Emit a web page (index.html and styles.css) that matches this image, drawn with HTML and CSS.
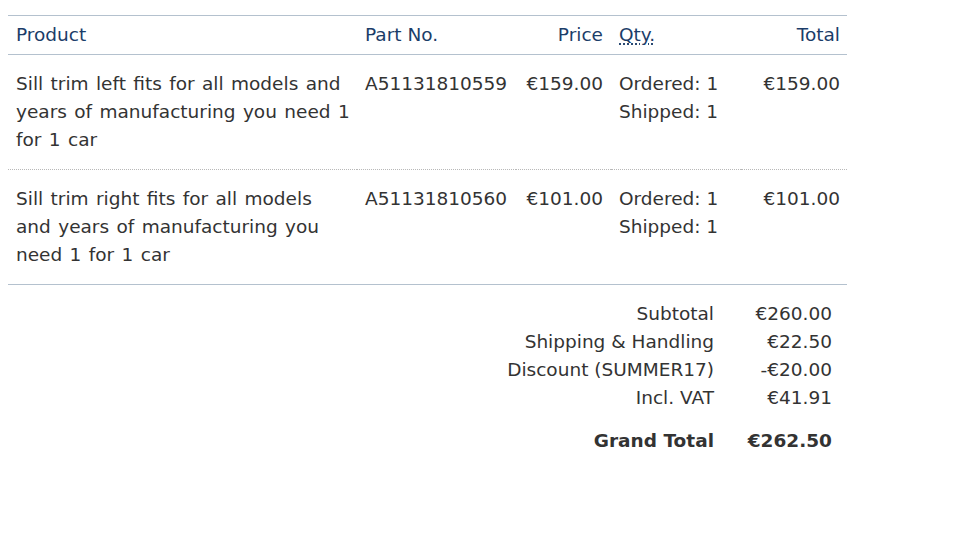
FILE: index.html
```html
<!DOCTYPE html>
<html>
<head>
<meta charset="utf-8">
<link rel="stylesheet" href="styles.css">
</head>
<body>
<div class="wrap">
<table class="items">
  <colgroup>
    <col class="c-name"><col class="c-sku"><col class="c-price"><col class="c-qty"><col class="c-total">
  </colgroup>
  <thead>
    <tr>
      <th class="name">Product</th>
      <th class="sku">Part No.</th>
      <th class="price">Price</th>
      <th class="qty"><abbr title="Quantity">Qty.</abbr></th>
      <th class="total">Total</th>
    </tr>
  </thead>
  <tbody>
    <tr class="row">
      <td class="name">Sill trim left fits for all models and years of manufacturing you need 1 for 1 car</td>
      <td class="sku">A51131810559</td>
      <td class="price">€159.00</td>
      <td class="qty">Ordered: 1<br>Shipped: 1</td>
      <td class="total">€159.00</td>
    </tr>
    <tr class="row last">
      <td class="name">Sill trim right fits for all models and years of manufacturing you need 1 for 1 car</td>
      <td class="sku">A51131810560</td>
      <td class="price">€101.00</td>
      <td class="qty">Ordered: 1<br>Shipped: 1</td>
      <td class="total">€101.00</td>
    </tr>
  </tbody>
</table>
<table class="totals">
  <tr><th>Subtotal</th><td>€260.00</td></tr>
  <tr><th>Shipping &amp; Handling</th><td>€22.50</td></tr>
  <tr><th>Discount (SUMMER17)</th><td>-€20.00</td></tr>
  <tr><th>Incl. VAT</th><td>€41.91</td></tr>
  <tr class="grand"><th>Grand Total</th><td>€262.50</td></tr>
</table>
</div>
</body>
</html>
```

FILE: styles.css
```css
html, body {
  margin: 0;
  padding: 0;
  background: #fff;
}
body {
  font-family: "DejaVu Sans", Verdana, sans-serif;
  font-size: 18.5px;
  line-height: 28px;
  color: #333;
}
.wrap {
  padding: 15px 8px 0 8px;
  width: 839px;
}
.items {
  width: 839px;
  border-collapse: collapse;
  table-layout: fixed;
}
.c-name { width: 349px; }
.c-sku { width: 159px; }
.c-price { width: 95px; }
.c-qty { width: 130px; }
.c-total { width: 106px; }
.items thead tr {
  border-top: 1px solid #b4c1ce;
  border-bottom: 1px solid #b4c1ce;
}
.items th {
  font-weight: normal;
  color: #1b3d69;
  padding: 5px 8px;
  text-align: left;
  vertical-align: top;
}
.items td {
  padding: 15px 8px;
  vertical-align: top;
  text-align: left;
}
.items td.name {
  padding-right: 6px;
  word-spacing: 1.5px;
}
.items .price, .items .total { text-align: right; }
.items .total { padding-right: 7px; }
abbr {
  text-decoration: underline dotted #1b3d69;
  text-underline-offset: 3px;
}
.items tbody tr.row { border-bottom: 1px dotted #b8b8b8; }
.items tbody tr.last { border-bottom: 1px solid #b4c1ce; }
.totals {
  border-collapse: collapse;
  margin-left: auto;
  margin-right: 15px;
  margin-top: 15px;
}
.totals th {
  font-weight: normal;
  text-align: right;
  padding: 0 18px 0 0;
}
.totals td {
  text-align: right;
  padding: 0;
  width: 100px;
}
.totals tr.grand th,
.totals tr.grand td {
  font-weight: bold;
  padding-top: 15px;
}
```
